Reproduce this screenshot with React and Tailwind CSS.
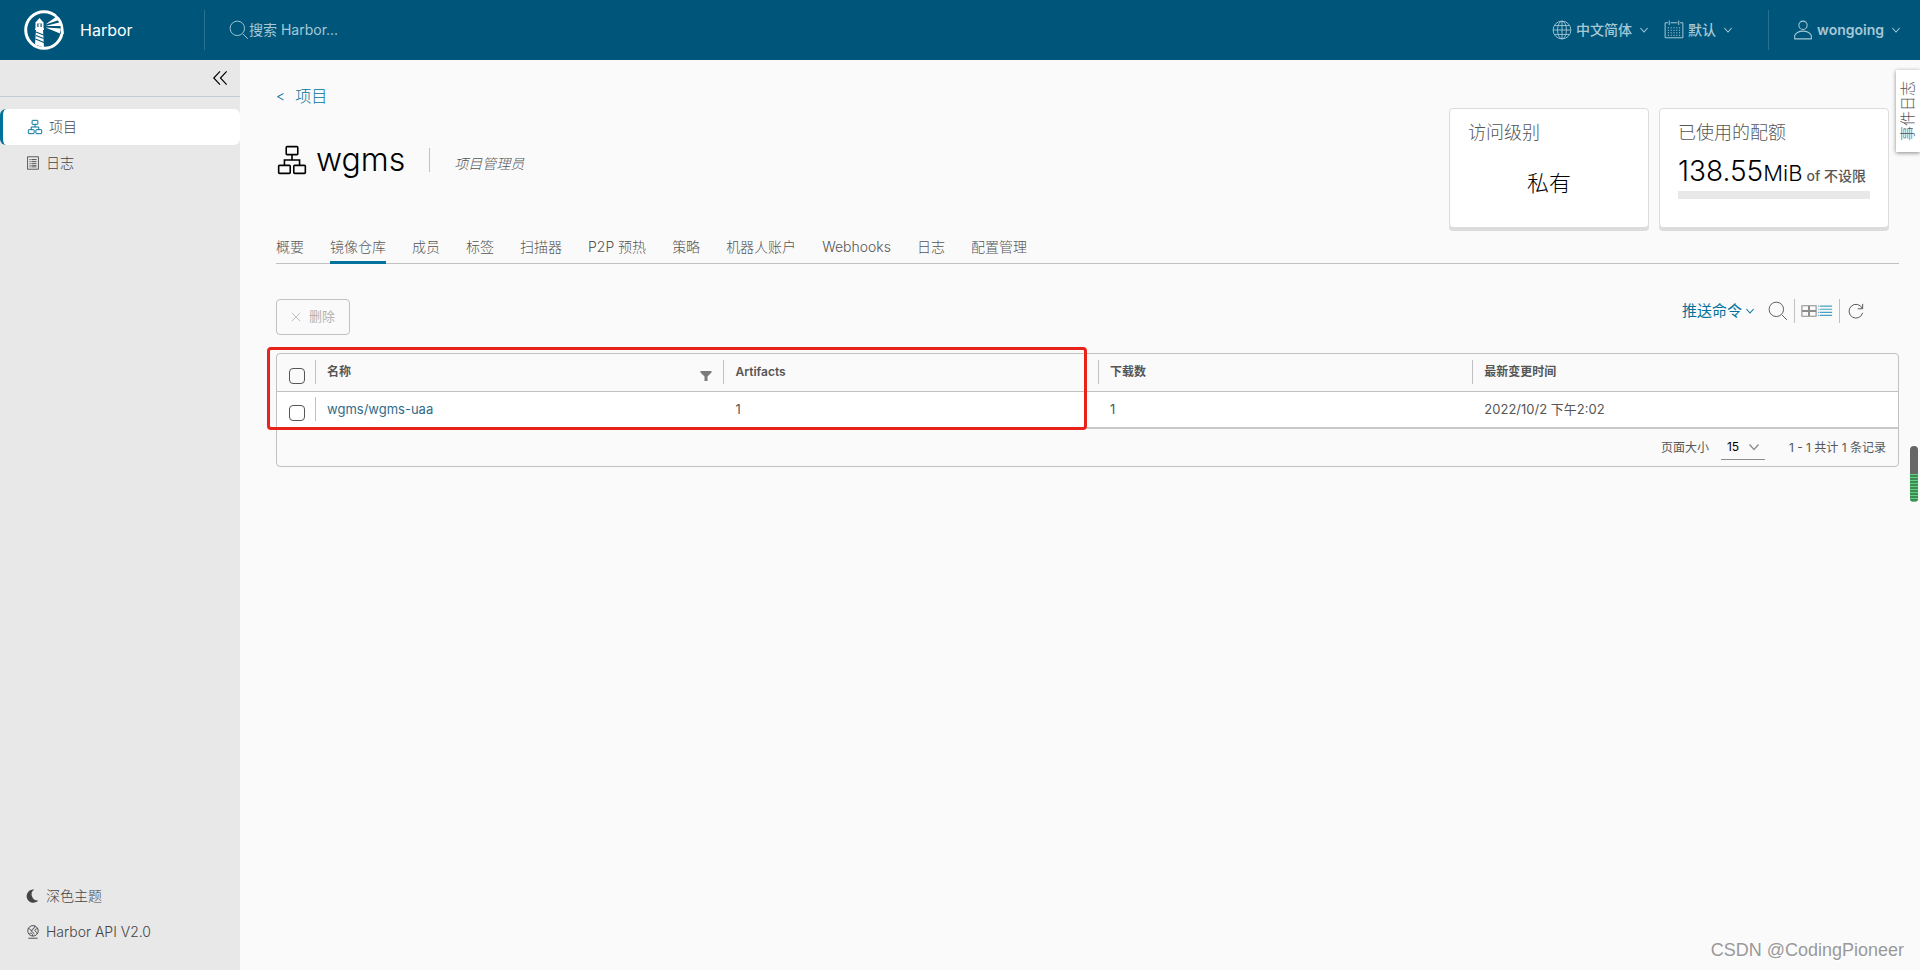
import React from "react";

const Svg = ({ className, children, sw = 2 }) => (
  <svg viewBox="0 0 36 36" className={className} fill="none" stroke="currentColor" strokeWidth={sw} aria-hidden="true">
    {children}
  </svg>
);

const Chevron = ({ className }) => (
  <svg viewBox="0 0 10 10" className={className} fill="none" stroke="currentColor" strokeWidth="1.3" aria-hidden="true">
    <path d="M.5 2.500 5 7.500l4.500-5" />
  </svg>
);

const OrgIcon = ({ className, sw }) => (
  <Svg className={className} sw={sw}>
    <rect x="11.500" y="3" width="13" height="9" rx="1" />
    <rect x="3" y="24" width="13" height="9" rx="1" />
    <rect x="20" y="24" width="13" height="9" rx="1" />
    <path d="M18 12v6M9.500 24v-6h17v6" />
  </Svg>
);

const SearchIcon = ({ className, sw = 1.7 }) => (
  <Svg className={className} sw={sw}>
    <circle cx="15" cy="15" r="13" />
    <path d="m25 25 9 9" />
  </Svg>
);

const GlobeIcon = ({ className }) => (
  <Svg className={className} sw={1.6}>
    <circle cx="18" cy="18" r="16" />
    <ellipse cx="18" cy="18" rx="8" ry="16" />
    <path d="M18 2v32M2 18h32M5 10h26M5 26h26" />
  </Svg>
);

const CalendarIcon = ({ className }) => (
  <Svg className={className} sw={1.8}>
    <path d="M7 5H2v27h32V5h-5M12 5h12M9.500 1v8M26.500 1v8" />
    <path d="M7 14h22M7 18.500h22M7 23h22M7 27.500h22" strokeDasharray="2 3" />
  </Svg>
);

const UserIcon = ({ className }) => (
  <Svg className={className} sw={1.9}>
    <circle cx="18" cy="9.500" r="7.500" />
    <path d="M3 34v-6c3-6 9-8 15-8s12 2 15 8v6z" strokeLinejoin="round" />
  </Svg>
);

const ListDocIcon = ({ className }) => (
  <Svg className={className} sw={2.2}>
    <path d="M4 2h28v32H4z" />
    <path d="M9 9h3M9 14h3M9 19h3M9 24h3M9 28h3M14 9h13M14 14h13M14 19h13M14 24h13M14 28h13" />
  </Svg>
);

const MoonIcon = ({ className }) => (
  <svg viewBox="0 0 36 36" className={className} fill="currentColor" aria-hidden="true">
    <path d="M31.500 29.500A17 17 0 1 1 21 1.500a15.500 15.500 0 0 0 10.500 28z" />
  </svg>
);

const ApiIcon = ({ className }) => (
  <Svg className={className} sw={2.4}>
    <circle cx="18" cy="15" r="13.500" />
    <path d="M6 9c4 0 5 5 9 5s1-6 5-6 2-4 2-5M9 24c0-4 4-4 6-2s2 3 2 6M30 10c-4-1-8 2-7 5s5 1 5 7M12 14l10 9" />
    <path d="M6 34h24" />
  </Svg>
);

const Logo = () => (
  <svg viewBox="0 0 40 40" className="size-10" aria-hidden="true">
    <circle cx="20" cy="20" r="18.300" fill="none" stroke="#fff" strokeWidth="3" />
    <path d="M20.500 15.500 34 3l7 10-1 8-4 3-14-6z" fill="#00567a" />
    <path d="M31 5.500A18.300 18.300 0 0 1 38.300 20v4" fill="none" stroke="#fff" strokeWidth="2.600" />
    <path d="M11.500 12.500 15.500 8l4 4.500V19h-8z" fill="#fff" />
    <path d="M13.300 13.500h4.400v3.500h-4.400z" fill="#00567a" />
    <path d="M14.500 13.500h2v3.500h-2z" fill="#fff" />
    <path d="M11 18.500h9V20h-1l1 17.500-9-3 1-14.500h-1z" fill="#fff" />
    <path d="m12 22 7.500 3M12 25.500l7.500 3M11.500 29l8.500 3.500" stroke="#00567a" strokeWidth="1.100" />
    <path d="m21.500 14.500 11-8 2.500 3.500zM21.500 16l15.500-4 .8 4zM21.500 17.500 37 18.500l-1 5z" fill="#fff" />
  </svg>
);

const tabs = ["概要", "镜像仓库", "成员", "标签", "扫描器", "P2P 预热", "策略", "机器人账户", "Webhooks", "日志", "配置管理"];

function Header() {
  return (
    <header className="flex h-15 items-center bg-[#00567a] text-[#a6c8d7]">
      <a href="#home" className="flex w-51 items-center gap-4 pl-6 text-white">
        <Logo />
        <span className="text-base">Harbor</span>
      </a>
      <label className="flex h-10 flex-1 items-center border-l border-[#2b7090] pl-6">
        <SearchIcon className="size-5" />
        <input
          aria-label="搜索"
          placeholder="搜索 Harbor..."
          className="w-64 bg-transparent text-sm outline-none placeholder:text-[#a6c8d7]"
        />
      </label>
      <button className="flex items-center gap-1 text-sm font-medium">
        <GlobeIcon className="size-5" />
        中文简体
        <Chevron className="ml-1 size-2" />
      </button>
      <button className="ml-4 flex items-center gap-1 text-sm font-medium">
        <CalendarIcon className="size-5" />
        默认
        <Chevron className="ml-1 size-2" />
      </button>
      <button className="ml-9 flex h-10 items-center gap-1 border-l border-[#2b7090] pr-5 pl-6 text-sm font-semibold">
        <UserIcon className="size-5" />
        wongoing
        <Chevron className="ml-1 size-2" />
      </button>
    </header>
  );
}

function Sidebar() {
  return (
    <aside className="flex w-60 shrink-0 flex-col bg-[#e8e8e8] pb-5 text-sm font-light text-[#454545]">
      <div className="flex h-[37px] items-center justify-end border-b border-[#c1cdd4] pr-3">
        <button aria-label="收起" className="text-black">
          <Svg className="size-4" sw={2.6}>
            <path d="M18 3 4 18l14 15M33 3 19 18l14 15" />
          </Svg>
        </button>
      </div>
      <nav className="mt-3 flex flex-1 flex-col">
        <a href="#projects" className="flex h-9 items-center gap-1.5 rounded-md border-l-3 border-[#00729c] bg-white pl-6">
          <OrgIcon className="size-4 text-[#00729c]" sw={2.2} />
          项目
        </a>
        <a href="#logs" className="flex h-9 items-center gap-1.5 pl-6.5">
          <ListDocIcon className="size-3.5" />
          日志
        </a>
        <button className="mt-auto flex h-9 items-center gap-1.5 pl-6.5">
          <MoonIcon className="size-3.5" />
          深色主题
        </button>
        <a href="#api" className="flex h-9 items-center gap-1.5 pl-6.5">
          <ApiIcon className="size-3.5" />
          Harbor API V2.0
        </a>
      </nav>
    </aside>
  );
}

function Cards() {
  return (
    <div className="mt-3 mr-2.5 flex gap-2.5">
      <section className="h-30 w-50 rounded-sm border border-[#dcdcdc] bg-white px-[18px] pt-2.5 shadow-[0_3px_0_#dcdcdc]">
        <h2 className="text-lg font-light text-[#565656]">访问级别</h2>
        <p className="mt-5 text-center text-[22px] font-light text-black">私有</p>
      </section>
      <section className="h-30 w-[230px] rounded-sm border border-[#dcdcdc] bg-white px-[18px] pt-2.5 shadow-[0_3px_0_#dcdcdc]">
        <h2 className="text-lg font-light text-[#565656]">已使用的配额</h2>
        <p className="mt-1 flex items-baseline gap-1 text-sm whitespace-nowrap">
          <span className="text-[28px] font-light text-black">
            138.55<span className="text-[22px]">MiB</span>
          </span>
          <span className="font-medium">of 不设限</span>
        </p>
        <div className="h-2 bg-[#e8e8e8]" />
      </section>
    </div>
  );
}

function Toolbar() {
  return (
    <div className="mt-[35px] flex items-start justify-between">
      <button disabled className="flex h-9 items-center gap-2 rounded-sm border border-[#c1c1c1] px-3.5 text-[13px] text-[#b3b3b3]">
        <Svg className="size-2.5" sw={3}>
          <path d="m3 3 30 30M33 3 3 33" />
        </Svg>
        删除
      </button>
      <div className="mr-[35px] flex h-6 items-center">
        <button className="mr-3.5 flex items-center gap-1 text-[15px] text-[#00729c]">
          推送命令
          <Chevron className="size-2" />
        </button>
        <button aria-label="搜索" className="mr-1.5">
          <SearchIcon className="size-5" />
        </button>
        <div className="flex h-6 items-center border-x border-[#c1c1c1] px-1.5">
          <button aria-label="卡片视图" className="text-[#8c8c8c]">
            <Svg className="size-4" sw={2.4}>
              <path d="M2 6h15v11H2zM19 6h15v11H19zM2 19h15v11H2zM19 19h15v11H19z" />
            </Svg>
          </button>
          <button aria-label="列表视图" className="text-[#49a0c4]">
            <Svg className="size-4" sw={2.6}>
              <path d="M2 7h2M6 7h28M2 14h2M6 14h28M2 21h2M6 21h28M2 28h2M6 28h28" />
            </Svg>
          </button>
        </div>
        <button aria-label="刷新" className="ml-2">
          <Svg className="size-4" sw={2.2}>
            <path d="M32 12A15.500 15.500 0 1 0 33 22M33 2v11H22" />
          </Svg>
        </button>
      </div>
    </div>
  );
}

const HeadCell = ({ children }) => (
  <th scope="col" className="p-0 text-left font-semibold">
    <div className="flex h-6 items-center justify-between border-l border-[#c1c1c1] px-[11px]">{children}</div>
  </th>
);

function DataGrid() {
  return (
    <div className="relative mt-[18px]">
      <div className="rounded-sm border border-[#c1c1c1]">
        <table className="w-full table-fixed border-collapse">
          <colgroup>
            <col className="w-[38px]" />
            <col className="w-[25.200%]" />
            <col className="w-[23.100%]" />
            <col className="w-[23.100%]" />
            <col />
          </colgroup>
          <thead>
            <tr className="h-[37px] border-b border-[#c1c1c1] text-xs">
              <th className="p-0 pt-2 pl-3 text-left">
                <input type="checkbox" aria-label="全选" className="block size-4 appearance-none rounded-sm border border-[#565656]" />
              </th>
              <HeadCell>
                名称
                <button aria-label="过滤" className="mt-2">
                  <svg viewBox="0 0 12 12" className="size-3" fill="#7a7a7a" aria-hidden="true">
                    <path d="M.5 1h11v1.500L7.500 6.500V11h-3V6.500L.5 2.500z" />
                  </svg>
                </button>
              </HeadCell>
              <HeadCell>Artifacts</HeadCell>
              <HeadCell>下载数</HeadCell>
              <HeadCell>最新变更时间</HeadCell>
            </tr>
          </thead>
          <tbody>
            <tr className="h-[37px] border-b-2 border-[#c8c8c8] bg-white text-[13px]">
              <td className="p-0 pt-2 pl-3">
                <input type="checkbox" aria-label="选择 wgms/wgms-uaa" className="block size-4 appearance-none rounded-sm border border-[#565656]" />
              </td>
              <td className="p-0">
                <div className="flex h-6 items-center border-l border-[#c1c1c1] px-[11px]">
                  <a href="#uaa" className="text-[#2f6b8a]">wgms/wgms-uaa</a>
                </div>
              </td>
              <td className="px-3">1</td>
              <td className="px-3">1</td>
              <td className="px-3">2022/10/2 下午2:02</td>
            </tr>
          </tbody>
        </table>
        <div className="flex h-[37px] items-center justify-end pr-3 text-xs">
          <label htmlFor="page-size">页面大小</label>
          <div className="relative mr-6 ml-3">
            <select id="page-size" defaultValue="15" className="h-6 w-11 appearance-none border-b border-[#8c8c8c] bg-transparent pl-1.5 text-black outline-none">
              <option>15</option>
              <option>25</option>
              <option>50</option>
            </select>
            <Chevron className="pointer-events-none absolute top-1.5 right-1.5 size-2.5 text-[#8c8c8c]" />
          </div>
          <span>1 - 1 共计 1 条记录</span>
        </div>
      </div>
      <div className="pointer-events-none absolute -top-1.5 -left-[9px] h-[83px] w-[50.500%] rounded-sm border-3 border-[#e8231b]" />
    </div>
  );
}

export default function App() {
  return (
    <div className="flex min-h-screen flex-col bg-[#fafafa] font-['Inter','Noto_Sans_CJK_SC',sans-serif] text-[#565656]">
      <Header />
      <div className="relative flex flex-1">
        <Sidebar />
        <main className="min-w-0 flex-1 pt-6 pr-[21px] pl-9">
          <a href="#projects" className="flex items-center gap-2.5 text-base leading-6 font-light text-[#00729c]">
            <span className="text-sm">&lt;</span>项目
          </a>
          <div className="flex h-[125px] justify-between">
            <div className="flex h-30 items-center pb-4">
              <OrgIcon className="size-8 text-black" sw={1.8} />
              <h1 className="ml-2 text-[32px] font-light text-black">wgms</h1>
              <span className="ml-6 flex h-6 items-end border-l border-[#c1c1c1] pl-6 text-sm leading-4 font-light italic">项目管理员</span>
            </div>
            <div className="-mt-3">
              <Cards />
            </div>
          </div>
          <nav className="flex gap-[26px] border-b border-[#c1c1c1] text-sm font-light">
            {tabs.map((t, i) => (
              <a
                key={t}
                href={"#tab" + i}
                className={i === 1 ? "-mb-px border-b-3 border-[#00729c] pt-1 pb-1" : "pt-1"}
              >
                {t}
              </a>
            ))}
          </nav>
          <Toolbar />
          <DataGrid />
        </main>
        <button className="absolute top-2.5 right-0 flex h-[82px] w-6 items-center justify-center bg-white text-[15px] font-light shadow-[0_1px_4px_#888]">
          <span className="rotate-180 [text-orientation:sideways] [writing-mode:vertical-rl]">事件日志</span>
        </button>
        <div className="absolute top-[386px] right-0.5 flex h-14 w-2 flex-col overflow-hidden rounded-full bg-[#666] pt-7">
          <div className="flex-1 bg-[repeating-linear-gradient(#5fd080_0_1px,#3f8a55_1px_3px)]" />
        </div>
        <p className="absolute right-4 bottom-1.5 font-['Liberation_Sans',sans-serif] text-lg text-[#999] [text-shadow:1px_1px_0_#fff]">CSDN @CodingPioneer</p>
      </div>
    </div>
  );
}
